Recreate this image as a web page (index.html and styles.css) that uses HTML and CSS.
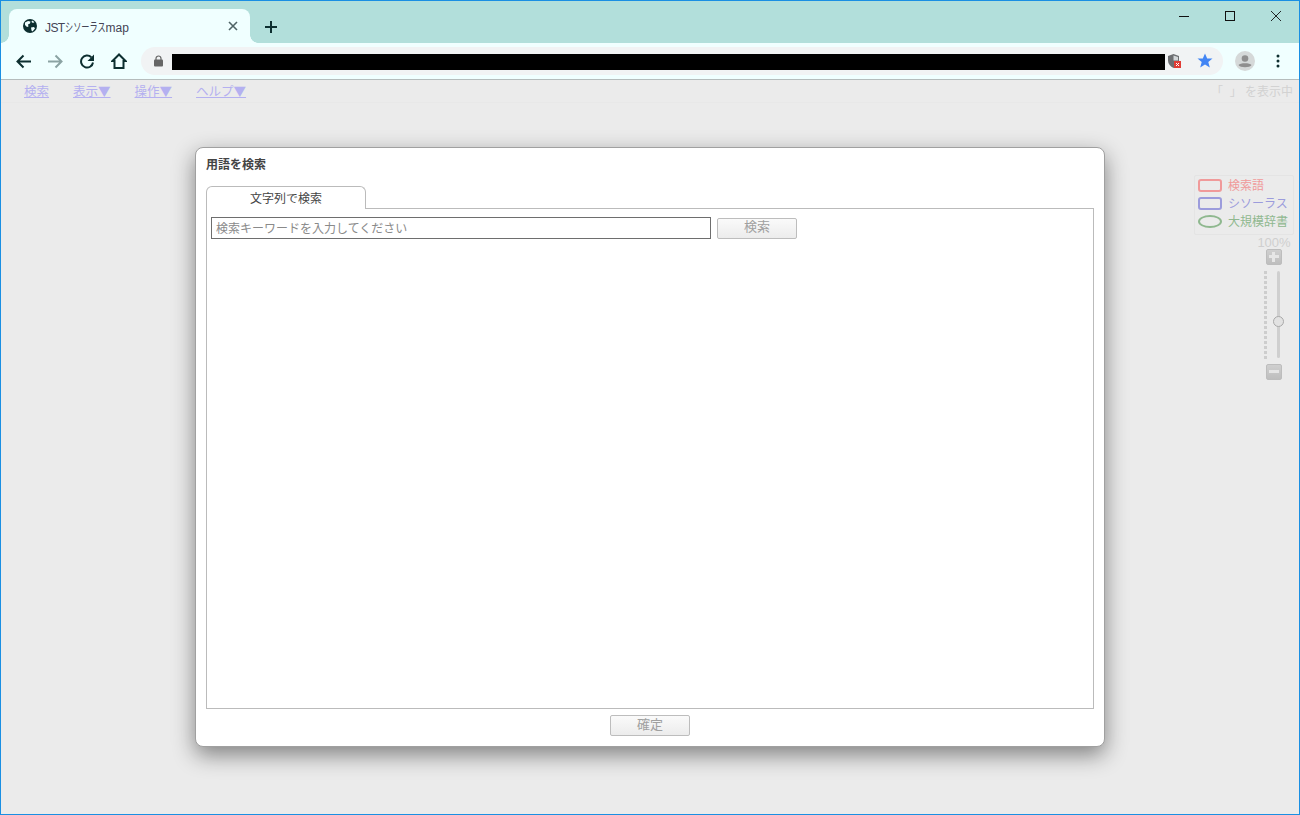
FILE: index.html
```html
<!DOCTYPE html>
<html lang="ja">
<head>
  <meta charset="UTF-8" />
  <title>JSTシソーラスmap</title>
  <link rel="stylesheet" href="styles.css">
</head>
<body>
  <div class="window">
    <!-- browser chrome -->
    <div class="tab-strip">
      <div class="tab">
        <svg class="favicon" width="16" height="16" viewBox="0 0 16 16">
          <circle cx="8" cy="8" r="7" fill="#0d2f30"/>
          <path d="M3 4.500l3-1.500 2.500.5-.5 2-2 1 .5 2-1.500.5L3 7z M9 9.500l3-.5 1 1.500-2.500 3-1-1z M10 2.500l2.500 1.500-1.500 1-1.500-1z" fill="#f0ffff"/>
        </svg>
        <span class="tab-title"><span class="tab-latin">JST</span><span class="tab-kana">シソーラス</span>map</span>
        <svg class="tab-close" width="10" height="10" viewBox="0 0 10 10">
          <path d="M1 1l8 8M9 1l-8 8" stroke="#4f6466" stroke-width="1.600" fill="none"/>
        </svg>
      </div>
      <svg class="new-tab" width="12" height="12" viewBox="0 0 12 12">
        <path d="M6 0v12M0 6h12" stroke="#0d2f30" stroke-width="2" fill="none"/>
      </svg>
      <div class="win-controls">
        <svg width="10" height="10" viewBox="0 0 10 10"><path d="M0 5.500h10" stroke="#111" fill="none"/></svg>
        <svg width="10" height="10" viewBox="0 0 10 10"><rect x=".5" y=".5" width="9" height="9" stroke="#111" fill="none"/></svg>
        <svg width="10" height="10" viewBox="0 0 10 10"><path d="M0 0l10 10M10 0L0 10" stroke="#111" stroke-width=".9" fill="none"/></svg>
      </div>
    </div>

    <div class="toolbar">
      <svg class="nav-icon" width="16" height="16" viewBox="0 0 16 16">
        <path d="M16 8.500H3M8.500 2.500L2.500 8.500l6 6" stroke="#0d2f30" stroke-width="2" fill="none"/>
      </svg>
      <svg class="nav-icon" width="16" height="16" viewBox="0 0 16 16">
        <path d="M1 8.500h13M8.500 2.500l6 6-6 6" stroke="#8ba3a3" stroke-width="2" fill="none"/>
      </svg>
      <svg class="nav-icon" width="16" height="16" viewBox="0 0 16 16">
        <path d="M14 9.500A6 6 0 1 1 12.300 4.300" stroke="#0d2f30" stroke-width="2" fill="none"/>
        <path d="M15 1.500V8H8.500z" fill="#0d2f30"/>
      </svg>
      <svg class="nav-icon" width="16" height="16" viewBox="0 0 16 16">
        <path d="M8 1.500L1.500 8H3.500v7h9V8h2z" stroke="#0d2f30" stroke-width="2" fill="none"/>
      </svg>
      <div class="omnibox">
        <svg class="lock" width="9" height="12" viewBox="0 0 9 12">
          <path d="M2 5V3.500a2.500 2.500 0 0 1 5 0V5" stroke="#666" stroke-width="1.200" fill="none"/>
          <rect y="4.500" width="9" height="7" rx="1" fill="#666"/>
        </svg>
        <div class="url-mask"></div>
        <svg class="shield" width="15" height="16" viewBox="0 0 15 16">
          <path d="M6.500 1L12 3v4.500c0 3.500-2.500 6-5.500 7.500C3.500 13.500 1 11 1 7.500V3z" fill="#6d6f72"/>
          <path d="M6.500 2.500L11 4v3.500H6.500z" fill="#d3d7d9"/>
          <rect x="7" y="8" width="7" height="7" fill="#e03c35"/>
          <path d="M9 10l3 3M12 10l-3 3" stroke="#fff" fill="none"/>
        </svg>
        <svg class="star" width="16" height="16" viewBox="0 0 16 16">
          <path d="M8 .5l2.200 5h5.300l-4.200 3.500 1.500 5.500L8 11.500l-4.800 3L4.700 9 .5 5.500h5.300z" fill="#4285f4"/>
        </svg>
      </div>
      <svg class="avatar" width="20" height="20" viewBox="0 0 20 20">
        <circle cx="10" cy="10" r="10" fill="#d5d9d9"/>
        <circle cx="10" cy="7.500" r="3.300" fill="#8f8f8f"/>
        <path d="M3.500 14c1.500-2.500 11.500-2.500 13 0-1.500 3-11.500 3-13 0z" fill="#8f8f8f"/>
      </svg>
      <svg class="dots" width="4" height="14" viewBox="0 0 4 14">
        <circle cx="2" cy="2" r="1.500" fill="#0d2f30"/>
        <circle cx="2" cy="7" r="1.500" fill="#0d2f30"/>
        <circle cx="2" cy="12" r="1.500" fill="#0d2f30"/>
      </svg>
    </div>

    <!-- page -->
    <div class="page">
      <div class="menu">
        <div class="menu-links">
          <a href="#">検索</a>
          <a href="#">表示▼</a>
          <a href="#">操作▼</a>
          <a href="#">ヘルプ▼</a>
        </div>
        <span class="menu-status">「  」 を表示中</span>
      </div>

      <div class="legend">
        <div class="legend-row red"><span class="swatch"></span>検索語</div>
        <div class="legend-row blue"><span class="swatch"></span>シソーラス</div>
        <div class="legend-row green"><span class="swatch oval"></span>大規模辞書</div>
      </div>

      <div class="zoom-tool">
        <div class="zoom-label">100%</div>
        <div class="zoom-btn plus"></div>
        <div class="zoom-track">
          <div class="zoom-ticks"></div>
          <div class="zoom-bar"><span class="zoom-knob"></span></div>
        </div>
        <div class="zoom-btn minus"></div>
      </div>

      <div class="dialog">
        <div class="dialog-title">用語を検索</div>
        <div class="tabs">
          <div class="tab-label">文字列で検索</div>
          <div class="tabs-line"></div>
        </div>
        <div class="tab-panel">
          <div class="search-row">
            <input class="keyword" type="text" placeholder="検索キーワードを入力してください">
            <button class="btn search-btn">検索</button>
          </div>
        </div>
        <div class="dialog-foot">
          <button class="btn">確定</button>
        </div>
      </div>
    </div>
  </div>
</body>
</html>
```

FILE: styles.css
```css
* {
  margin: 0;
  padding: 0;
  box-sizing: border-box;
}

html, body {
  height: 100%;
  overflow: hidden;
}

body {
  font-family: "Liberation Sans", "Noto Sans CJK JP", sans-serif;
  font-size: 13px;
  color: #333;
}

.window {
  height: 815px;
  border: 1px solid #1a8fe3;
  display: flex;
  flex-direction: column;
  background-color: #ebebeb;
}

.tab-strip {
  height: 42px;
  flex: none;
  background-color: #b2dfdb;
  display: flex;
  align-items: flex-end;
  padding-left: 8px;
  position: relative;
}

.tab {
  width: 241px;
  height: 34px;
  background-color: #f0ffff;
  border-radius: 8px 8px 0 0;
  display: flex;
  align-items: center;
  padding: 0 0 0 13px;
  position: relative;
}

/* concave feet at the bottom of the tab */
.tab::before, .tab::after {
  content: "";
  position: absolute;
  bottom: 0;
  width: 8px;
  height: 8px;
}

.tab::before {
  left: -8px;
  background: radial-gradient(circle at 0 0, transparent 7.500px, #f0ffff 8px);
}

.tab::after {
  right: -8px;
  background: radial-gradient(circle at 100% 0, transparent 7.500px, #f0ffff 8px);
}

.favicon {
  flex: none;
}

.tab-title {
  margin-left: 7px;
  font-size: 12px;
  color: #445;
  flex: 1;
  white-space: nowrap;
}

.tab-latin {
  letter-spacing: -0.6px;
}

.tab-kana {
  display: inline-block;
  width: 41px;
  transform: scaleX(0.68);
  transform-origin: left center;
}

.tab-close {
  margin-right: 12px;
}

.new-tab {
  margin: 0 0 10px 15px;
}

.win-controls {
  position: absolute;
  top: 10px;
  right: 18px;
  display: flex;
  gap: 36px;
}

.toolbar {
  height: 37px;
  flex: none;
  background-color: #f0ffff;
  border-bottom: 1px solid #b5bcbc;
  display: flex;
  align-items: center;
  padding: 0 14px;
}

.nav-icon {
  flex: none;
  margin-right: 16px;
}

.nav-icon:nth-child(4) {
  margin-right: 14px;
}

.omnibox {
  height: 28px;
  background-color: #f1f3f4;
  border-radius: 14px;
  display: flex;
  align-items: center;
  padding-left: 13px;
  width: 1082px;
  flex: none;
}

.lock {
  flex: none;
}

.url-mask {
  width: 993px;
  height: 16px;
  background-color: #000;
  margin: 2px 0 0 9px;
  flex: none;
}

.shield {
  margin-left: 2px;
  flex: none;
}

.star {
  margin-left: 15px;
  flex: none;
}

.avatar {
  margin-left: 12px;
  flex: none;
}

.dots {
  margin-left: 21px;
  flex: none;
}

.page {
  flex: 1;
  position: relative;
  background-color: #ebebeb;
}

.menu {
  height: 23px;
  display: flex;
  justify-content: space-between;
  align-items: center;
  padding: 0 6px 2px 23px;
  border-bottom: 1px solid #e8e8e8;
}

.menu-links {
  display: flex;
  gap: 24px;
  font-family: "Noto Sans CJK JP", sans-serif;
  font-size: 12.500px;
}

.menu-links a {
  color: #b4b0f0;
}

.menu-status {
  color: #d2d2d2;
  font-size: 12px;
  white-space: pre;
}

.legend {
  position: absolute;
  top: 95px;
  left: 1193px;
  width: 100px;
  height: 60px;
  border: 1px solid #e4e4e4;
  border-radius: 2px;
  padding: 0 3px;
  font-size: 12px;
}

.legend-row {
  height: 18px;
  padding-bottom: 2px;
  display: flex;
  align-items: center;
  gap: 6px;
  white-space: nowrap;
}

.swatch {
  width: 24px;
  height: 13px;
  margin-top: 2px;
  border: 2px solid;
  border-radius: 3px;
  flex: none;
}

.swatch.oval {
  border-radius: 50%;
}

.red {
  color: #f09a9a;
}

.blue {
  color: #9c9cdc;
}

.green {
  color: #8fb88f;
}

.zoom-tool {
  position: absolute;
  top: 156px;
  left: 1253px;
  width: 46px;
  display: flex;
  flex-direction: column;
  align-items: center;
}

.zoom-label {
  height: 13px;
  line-height: 13px;
  font-size: 13px;
  color: #cfcfcf;
  margin-left: -6px;
}

.zoom-btn {
  width: 16px;
  height: 16px;
  background: linear-gradient(#cfcfcf, #bebebe);
  border: 1px solid #bdbdbd;
  border-radius: 2px;
  margin-left: -6px;
  position: relative;
}

.plus::before, .minus::before {
  content: "";
  position: absolute;
  left: 2px;
  right: 2px;
  top: 5px;
  height: 3px;
  background-color: #e6e6e6;
}

.plus::after {
  content: "";
  position: absolute;
  top: 2px;
  bottom: 2px;
  left: 5px;
  width: 3px;
  background-color: #e6e6e6;
}

.zoom-track {
  height: 99px;
  display: flex;
  justify-content: center;
  gap: 10px;
  padding-top: 6px;
  margin-left: -10px;
}

.zoom-ticks {
  width: 3px;
  height: 88px;
  background-image: repeating-linear-gradient(#cdcdcd 0 3px, transparent 3px 5px);
}

.zoom-bar {
  width: 3px;
  height: 87px;
  background-color: #cfcfcf;
  border-radius: 2px;
  position: relative;
}

.zoom-knob {
  position: absolute;
  top: 45px;
  left: -4px;
  width: 11px;
  height: 11px;
  border-radius: 50%;
  background-color: #e2e2e2;
  border: 1px solid #a9a9a9;
}

.dialog {
  position: absolute;
  top: 67px;
  left: 194px;
  width: 910px;
  height: 600px;
  background-color: #fff;
  border: 1px solid #a0a0a0;
  border-radius: 8px;
  box-shadow: 0 8px 22px rgba(0, 0, 0, 0.45);
  padding: 0 10px;
  display: flex;
  flex-direction: column;
}

.dialog-title {
  height: 38px;
  padding-top: 9px;
  line-height: 16px;
  font-size: 12px;
  font-weight: bold;
  color: #444;
}

.tabs {
  display: flex;
  height: 23px;
  flex: none;
}

.tab-label {
  width: 160px;
  height: 23px;
  border: 1px solid #bbb;
  border-bottom: none;
  border-radius: 6px 6px 0 0;
  text-align: center;
  line-height: 24px;
  font-size: 12px;
  color: #444;
}

.tabs-line {
  flex: 1;
  border-bottom: 1px solid #bbb;
}

.tab-panel {
  flex: 1;
  border: 1px solid #bbb;
  border-top: none;
  padding: 8px 4px;
}

.search-row {
  display: flex;
  align-items: center;
  gap: 6px;
}

.keyword {
  width: 500px;
  height: 22px;
  border: 1px solid #6e6e6e;
  padding: 1px 4px 0;
  font-family: inherit;
  font-size: 12px;
  outline: none;
}

.keyword::placeholder {
  color: #8a8a8a;
}

.btn {
  width: 80px;
  height: 21px;
  padding-bottom: 2px;
  line-height: 14px;
  background: linear-gradient(#fafafa, #ececec);
  border: 1px solid #bdbdbd;
  border-radius: 2px;
  color: #a0a0a0;
  font-family: inherit;
  font-size: 13px;
}

.dialog-foot {
  height: 37px;
  flex: none;
  display: flex;
  justify-content: center;
  padding-top: 6px;
}
```
